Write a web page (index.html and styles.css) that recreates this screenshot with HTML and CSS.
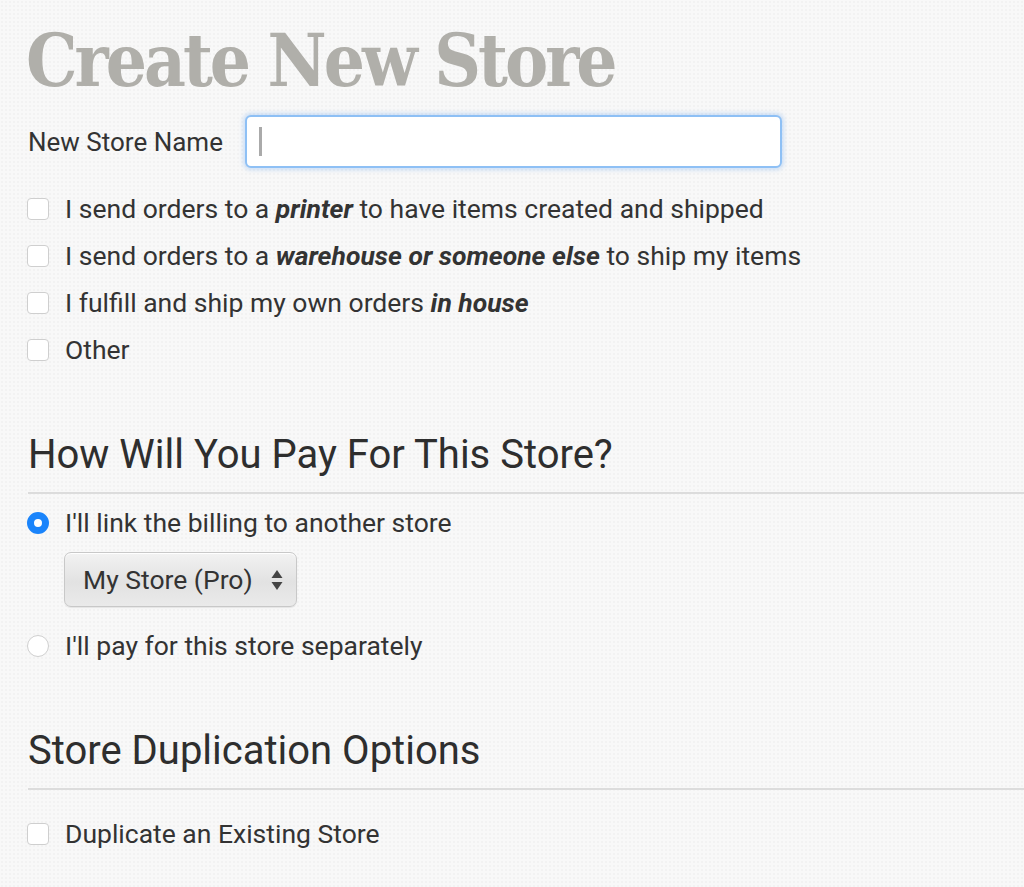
FILE: index.html
```html
<!DOCTYPE html>
<html lang="en">
<head>
<meta charset="utf-8">
<title>Create New Store</title>
<link rel="stylesheet" href="styles.css">
</head>
<body>
<main class="page">
  <h1 class="title">Create New Store</h1>

  <div class="name-row">
    <label class="name-label">New Store Name</label>
    <div class="text-input"><span class="caret"></span></div>
  </div>

  <ul class="options">
    <li class="option"><span class="box"></span><span>I send orders to a <b><i>printer</i></b> to have items created and shipped</span></li>
    <li class="option"><span class="box"></span><span>I send orders to a <b><i>warehouse or someone else</i></b> to ship my items</span></li>
    <li class="option"><span class="box"></span><span>I fulfill and ship my own orders <b><i>in house</i></b></span></li>
    <li class="option"><span class="box"></span><span>Other</span></li>
  </ul>

  <h2 class="section-title">How Will You Pay For This Store?</h2>
  <hr class="rule">

  <div class="radio-row"><span class="radio checked"></span><span class="radio-text">I'll link the billing to another store</span></div>
  <div class="select-box">
    <span class="select-text">My Store (Pro)</span>
    <svg class="select-arrows" width="12" height="24" viewBox="0 0 12 24"><path d="M6 2 L11.5 10 H0.5 Z" fill="#444"/><path d="M6 22 L11.5 14 H0.5 Z" fill="#444"/></svg>
  </div>
  <div class="radio-row second"><span class="radio"></span><span class="radio-text">I'll pay for this store separately</span></div>

  <h2 class="section-title dup">Store Duplication Options</h2>
  <hr class="rule rule-dup">

  <ul class="options last">
    <li class="option"><span class="box"></span><span>Duplicate an Existing Store</span></li>
  </ul>
</main>
</body>
</html>
```

FILE: styles.css
```css
html, body {
  margin: 0;
  padding: 0;
}
body {
  background-color: #f8f8f8;
  background-image: radial-gradient(rgba(0,0,0,0.025) 1px, transparent 1px);
  background-size: 4px 4px;
  font-family: Roboto, "Liberation Sans", sans-serif;
  color: #333;
  overflow: hidden;
}
.page {
  padding: 0 0 0 28px;
}
.title {
  font-family: "DejaVu Serif Condensed", "DejaVu Serif", serif;
  font-weight: bold;
  font-size: 72px;
  line-height: 72px;
  height: 72px;
  color: #b0afaa;
  margin: 25px 0 0 -2px;
  letter-spacing: -3px;
  white-space: nowrap;
}
.name-row {
  display: flex;
  align-items: center;
  margin-top: 18px;
}
.name-label {
  font-size: 26px;
  width: 217px;
  flex: none;
}
.text-input {
  width: 521px;
  height: 49px;
  border: 2px solid #8ec0f5;
  border-radius: 6px;
  background: #fff;
  box-shadow: 0 0 4px 2px rgba(120,175,240,0.35);
  display: flex;
  align-items: center;
  padding-left: 12px;
  box-sizing: content-box;
}
.caret {
  width: 3px;
  height: 29px;
  background: #aaa;
}
.options {
  list-style: none;
  margin: 17px 0 0 0;
  padding: 0;
}
.option {
  display: flex;
  align-items: center;
  height: 47px;
  font-size: 26.5px;
  white-space: nowrap;
}
.option b { font-weight: bold; }
.box {
  width: 20px;
  height: 20px;
  border: 1px solid #cfcfcf;
  border-radius: 4px;
  background: #fff;
  margin-right: 16px;
  flex: none;
  margin-left: -1px;
}
.section-title {
  font-size: 40px;
  font-weight: normal;
  margin: 62px 0 0 0;
  line-height: 40px;
  height: 40px;
  color: #2e2e2e;
  white-space: nowrap;
}
.section-title.dup {
  margin-top: 62px;
}
.rule {
  border: none;
  border-top: 2px solid #dcdcdc;
  margin: 17px 0 0 0;
}
.rule-dup {
  margin-top: 17px;
}
.radio-row {
  display: flex;
  align-items: center;
  height: 47px;
  margin-top: 5px;
  font-size: 26.5px;
  white-space: nowrap;
}
.radio-row.second {
  margin-top: 15px;
}
.radio {
  width: 20px;
  height: 20px;
  border-radius: 50%;
  border: 1px solid #cfcfcf;
  background: #fff;
  margin-right: 16px;
  margin-left: -1px;
  flex: none;
  box-sizing: content-box;
}
.radio.checked {
  border: 7px solid #1a84fb;
  width: 8px;
  height: 8px;
}
.select-box {
  margin: 6px 0 0 36px;
  width: 233px;
  height: 55px;
  border: 1px solid #c8c8c8;
  border-radius: 7px;
  background: linear-gradient(#f2f2f2, #e2e2e2 55%, #eaeaea);
  box-shadow: inset 0 1px 0 #fff, 0 1px 1px rgba(0,0,0,0.08);
  display: flex;
  align-items: center;
  justify-content: space-between;
  padding: 0 13px 0 18px;
  box-sizing: border-box;
  font-size: 26.5px;
  color: #333;
}
.options.last {
  margin-top: 20px;
}
```
